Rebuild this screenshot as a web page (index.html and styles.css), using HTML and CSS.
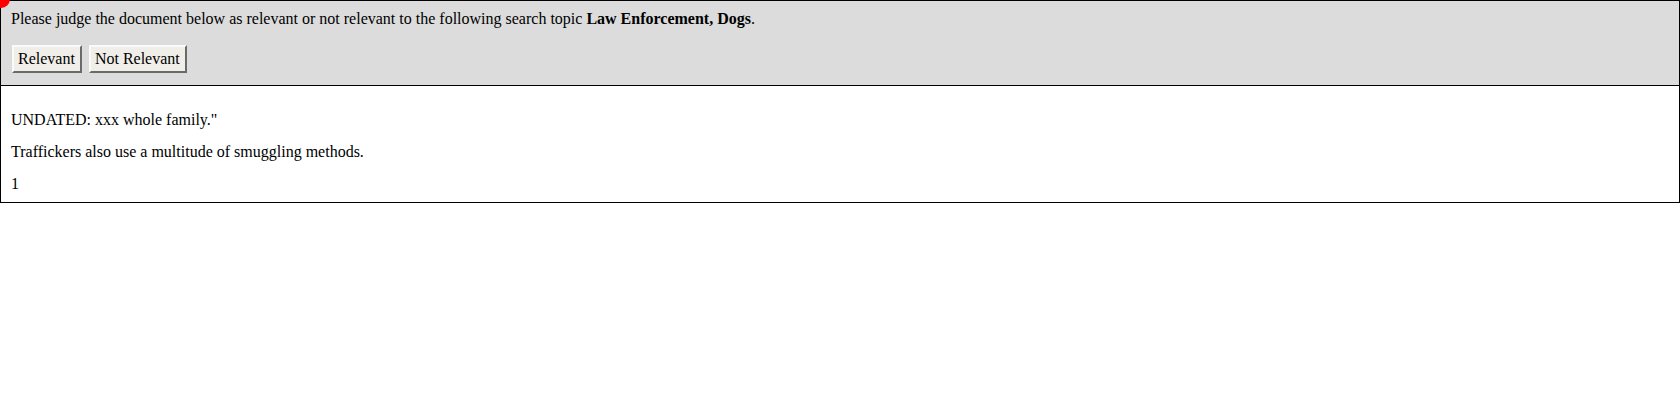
FILE: index.html
```html
<!DOCTYPE html>
<html>
<head>
<meta charset="utf-8">
<link rel="stylesheet" href="styles.css">
</head>
<body>
<div class="dot"></div>
<div class="panel">
  <div class="prompt">Please judge the document below as relevant or not relevant to the following search topic <b>Law Enforcement, Dogs</b>.</div>
  <div class="actions">
    <button class="btn">Relevant</button>
    <button class="btn">Not Relevant</button>
  </div>
</div>
<div class="doc">
  <p>UNDATED: xxx whole family."</p>
  <p>Traffickers also use a multitude of smuggling methods.</p>
  <p>1</p>
</div>
</body>
</html>
```
FILE: styles.css
```css
html, body {
  margin: 0;
  padding: 0;
  background: #fff;
}
body {
  font-family: "Liberation Serif", "Times New Roman", serif;
  font-size: 16px;
  color: #000;
}
.dot {
  position: absolute;
  left: -8px;
  top: -10px;
  width: 18px;
  height: 18px;
  border-radius: 50%;
  background: #f00;
}
.panel {
  background: #dcdcdc;
  border: 1px solid #000;
  padding: 9px 10px 12px;
}
.prompt {
  line-height: 18px;
}
.actions {
  display: flex;
  gap: 7px;
  margin-top: 17px;
  padding-left: 1px;
}
.btn {
  font-family: "Liberation Serif", "Times New Roman", serif;
  font-size: 16px;
  color: #000;
  background: #f0eee9;
  border: 2px solid;
  border-top-color: #fafafa;
  border-left-color: #fafafa;
  border-right-color: #6a6a6a;
  border-bottom-color: #6a6a6a;
  padding: 3px 5px 3px 4px;
  height: 28px;
  line-height: 18px;
}
.doc {
  border: 1px solid #000;
  border-top: none;
  padding: 24px 10px 8px;
}
.doc p {
  margin: 0 0 12px;
  line-height: 20px;
}
.doc p:last-child {
  margin-bottom: 0;
}
```
